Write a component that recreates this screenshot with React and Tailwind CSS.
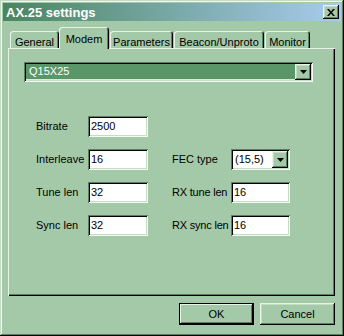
import React from 'react';

const raised =
  'shadow-[inset_-1px_-1px_0_#000,inset_1px_1px_0_#e8f3e8,inset_-2px_-2px_0_#5f7f64,inset_2px_2px_0_#c4dcc6]';
const sunken =
  'shadow-[inset_1px_1px_0_#5f7f64,inset_-1px_-1px_0_#f4faf4,inset_2px_2px_0_#000,inset_-2px_-2px_0_#c4dcc6]';

function Arrow() {
  return (
    <svg width="7" height="4" viewBox="0 0 7 4" className="block">
      <path d="M0 0h7L3.5 4z" fill="#000" />
    </svg>
  );
}

function Field({ value, width = 'w-[60px]' }) {
  return (
    <div className={`${width} h-[21px] bg-white ${sunken} flex items-center pl-[3px] text-[11px] text-black`}>
      {value}
    </div>
  );
}

function Tab({ label, width, selected }) {
  if (selected) {
    return (
      <div
        className={`relative z-10 ${width} h-[22px] -mb-[1px] bg-[#a4c9a9] rounded-t-[3px] flex items-start justify-center pt-[4px] text-[11px] text-black shadow-[inset_1px_1px_0_#e8f3e8,inset_-1px_0_0_#000,inset_-2px_0_0_#5f7f64]`}
      >
        {label}
      </div>
    );
  }
  return (
    <div
      className={`${width} h-[17px] rounded-t-[3px] flex items-start justify-center pt-[3px] text-[11px] text-black shadow-[inset_1px_1px_0_#e8f3e8,inset_-1px_0_0_#000,inset_-2px_0_0_#5f7f64]`}
    >
      {label}
    </div>
  );
}

function Row({ children }) {
  return <div className="flex items-center h-[21px]">{children}</div>;
}

export default function App() {
  return (
    <div className="w-[344px] h-[336px] bg-[#a4c9a9] p-[3px] flex flex-col font-['Liberation_Sans',Arial,sans-serif] shadow-[inset_-1px_-1px_0_#000,inset_1px_1px_0_#c4dcc6,inset_-2px_-2px_0_#5f7f64,inset_2px_2px_0_#f0f8f0]">
      {/* Title bar */}
      <div className="h-[18px] flex items-center justify-between pl-[3px] pr-[2px] bg-linear-to-r from-[#4a8560] to-[#a8cbee]">
        <span className="text-[13px] font-bold text-white leading-none">AX.25 settings</span>
        <button className={`w-[16px] h-[14px] bg-[#a4c9a9] ${raised} flex items-center justify-center`}>
          <svg width="8" height="7" viewBox="0 0 8 7">
            <path d="M0 0h2l2 2.5L6 0h2L5 3.5 8 7H6L4 4.5 2 7H0l3-3.5z" fill="#000" />
          </svg>
        </button>
      </div>

      {/* Tabs */}
      <div className="mt-[6px] ml-[7px] flex items-end h-[21px]">
        <Tab label="General" width="w-[49px]" />
        <Tab label="Modem" width="w-[50px]" selected />
        <div className="w-[1px]" />
        <Tab label="Parameters" width="w-[63px]" />
        <div className="w-[1px]" />
        <Tab label="Beacon/Unproto" width="w-[90px]" />
        <div className="w-[1px]" />
        <Tab label="Monitor" width="w-[45px]" />
      </div>

      {/* Panel */}
      <div className="ml-[5px] w-[327px] h-[248px] pl-[16px] pt-[14px] shadow-[inset_1px_1px_0_#e8f3e8,inset_-1px_-1px_0_#000,inset_-2px_-2px_0_#5f7f64]">
        <div className={`w-[289px] h-[20px] bg-white ${sunken} flex p-[2px]`}>
          <div className="flex-1 bg-[#5b9669] text-white text-[11px] flex items-center pl-[3px] border-b border-[#dcebdc]">
            Q15X25
          </div>
          <div className={`w-[16px] h-[16px] bg-[#a4c9a9] ${raised} flex items-center justify-center`}>
            <Arrow />
          </div>
        </div>

        <div className="mt-[34px] ml-[12px] flex flex-col gap-[12px] text-[11px] text-black">
          <Row>
            <span className="w-[52px]">Bitrate</span>
            <Field value="2500" />
          </Row>
          <Row>
            <span className="w-[52px]">Interleave</span>
            <Field value="16" />
            <span className="w-[24px]" />
            <span className="w-[59px]">FEC type</span>
            <div className={`w-[59px] h-[21px] bg-white ${sunken} flex p-[2px]`}>
              <div className="flex-1 flex items-center pl-[2px]">(15,5)</div>
              <div className={`w-[16px] h-[17px] bg-[#a4c9a9] ${raised} flex items-center justify-center`}>
                <Arrow />
              </div>
            </div>
          </Row>
          <Row>
            <span className="w-[52px]">Tune len</span>
            <Field value="32" />
            <span className="w-[24px]" />
            <span className="w-[59px] tracking-[-0.2px]">RX tune len</span>
            <Field value="16" width="w-[59px]" />
          </Row>
          <Row>
            <span className="w-[52px]">Sync len</span>
            <Field value="32" />
            <span className="w-[24px]" />
            <span className="w-[59px] tracking-[-0.2px]">RX sync len</span>
            <Field value="16" width="w-[59px]" />
          </Row>
        </div>
      </div>

      {/* Buttons */}
      <div className="mt-[7px] flex justify-end gap-[6px] pr-[6px]">
        <button className="w-[75px] h-[22px] border border-black bg-[#a4c9a9] text-[11px] text-black shadow-[inset_-1px_-1px_0_#000,inset_1px_1px_0_#e8f3e8,inset_-2px_-2px_0_#5f7f64]">
          OK
        </button>
        <button className={`w-[75px] h-[22px] bg-[#a4c9a9] ${raised} text-[11px] text-black`}>
          Cancel
        </button>
      </div>
    </div>
  );
}
